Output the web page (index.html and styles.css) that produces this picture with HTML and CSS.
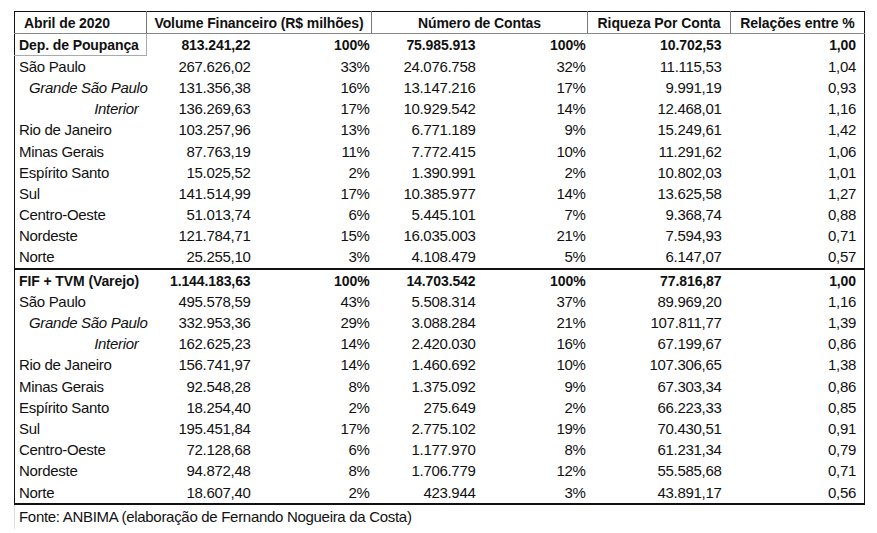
FILE: index.html
```html
<!DOCTYPE html>
<html lang="pt-BR">
<head>
<meta charset="utf-8">
<title>Abril de 2020</title>
<link rel="stylesheet" href="styles.css">
</head>
<body>
<div class="wrap">
<table class="tbl">
  <colgroup>
    <col class="c1"><col class="c2a"><col class="c2b"><col class="c3a"><col class="c3b"><col class="c4"><col class="c5">
  </colgroup>
  <thead>
    <tr class="head">
      <th class="h-first">Abril de 2020</th>
      <th colspan="2">Volume Financeiro (R$ milhões)</th>
      <th colspan="2">Número de Contas</th>
      <th>Riqueza Por Conta</th>
      <th>Relações entre %</th>
    </tr>
  </thead>
  <tbody>
    <tr class="total"><td class="lbl boxed">Dep. de Poupança</td><td class="n2a">813.241,22</td><td class="n2b">100%</td><td class="n3a">75.985.913</td><td class="n3b">100%</td><td class="n4">10.702,53</td><td class="n5">1,00</td></tr>
    <tr><td class="lbl">São Paulo</td><td class="n2a">267.626,02</td><td class="n2b">33%</td><td class="n3a">24.076.758</td><td class="n3b">32%</td><td class="n4">11.115,53</td><td class="n5">1,04</td></tr>
    <tr><td class="lbl sub">Grande São Paulo</td><td class="n2a">131.356,38</td><td class="n2b">16%</td><td class="n3a">13.147.216</td><td class="n3b">17%</td><td class="n4">9.991,19</td><td class="n5">0,93</td></tr>
    <tr><td class="lbl sub-r">Interior</td><td class="n2a">136.269,63</td><td class="n2b">17%</td><td class="n3a">10.929.542</td><td class="n3b">14%</td><td class="n4">12.468,01</td><td class="n5">1,16</td></tr>
    <tr><td class="lbl">Rio de Janeiro</td><td class="n2a">103.257,96</td><td class="n2b">13%</td><td class="n3a">6.771.189</td><td class="n3b">9%</td><td class="n4">15.249,61</td><td class="n5">1,42</td></tr>
    <tr><td class="lbl">Minas Gerais</td><td class="n2a">87.763,19</td><td class="n2b">11%</td><td class="n3a">7.772.415</td><td class="n3b">10%</td><td class="n4">11.291,62</td><td class="n5">1,06</td></tr>
    <tr><td class="lbl">Espírito Santo</td><td class="n2a">15.025,52</td><td class="n2b">2%</td><td class="n3a">1.390.991</td><td class="n3b">2%</td><td class="n4">10.802,03</td><td class="n5">1,01</td></tr>
    <tr><td class="lbl">Sul</td><td class="n2a">141.514,99</td><td class="n2b">17%</td><td class="n3a">10.385.977</td><td class="n3b">14%</td><td class="n4">13.625,58</td><td class="n5">1,27</td></tr>
    <tr><td class="lbl">Centro-Oeste</td><td class="n2a">51.013,74</td><td class="n2b">6%</td><td class="n3a">5.445.101</td><td class="n3b">7%</td><td class="n4">9.368,74</td><td class="n5">0,88</td></tr>
    <tr><td class="lbl">Nordeste</td><td class="n2a">121.784,71</td><td class="n2b">15%</td><td class="n3a">16.035.003</td><td class="n3b">21%</td><td class="n4">7.594,93</td><td class="n5">0,71</td></tr>
    <tr><td class="lbl">Norte</td><td class="n2a">25.255,10</td><td class="n2b">3%</td><td class="n3a">4.108.479</td><td class="n3b">5%</td><td class="n4">6.147,07</td><td class="n5">0,57</td></tr>
    <tr class="total sep"><td class="lbl">FIF + TVM (Varejo)</td><td class="n2a">1.144.183,63</td><td class="n2b">100%</td><td class="n3a">14.703.542</td><td class="n3b">100%</td><td class="n4">77.816,87</td><td class="n5">1,00</td></tr>
    <tr><td class="lbl">São Paulo</td><td class="n2a">495.578,59</td><td class="n2b">43%</td><td class="n3a">5.508.314</td><td class="n3b">37%</td><td class="n4">89.969,20</td><td class="n5">1,16</td></tr>
    <tr><td class="lbl sub">Grande São Paulo</td><td class="n2a">332.953,36</td><td class="n2b">29%</td><td class="n3a">3.088.284</td><td class="n3b">21%</td><td class="n4">107.811,77</td><td class="n5">1,39</td></tr>
    <tr><td class="lbl sub-r">Interior</td><td class="n2a">162.625,23</td><td class="n2b">14%</td><td class="n3a">2.420.030</td><td class="n3b">16%</td><td class="n4">67.199,67</td><td class="n5">0,86</td></tr>
    <tr><td class="lbl">Rio de Janeiro</td><td class="n2a">156.741,97</td><td class="n2b">14%</td><td class="n3a">1.460.692</td><td class="n3b">10%</td><td class="n4">107.306,65</td><td class="n5">1,38</td></tr>
    <tr><td class="lbl">Minas Gerais</td><td class="n2a">92.548,28</td><td class="n2b">8%</td><td class="n3a">1.375.092</td><td class="n3b">9%</td><td class="n4">67.303,34</td><td class="n5">0,86</td></tr>
    <tr><td class="lbl">Espírito Santo</td><td class="n2a">18.254,40</td><td class="n2b">2%</td><td class="n3a">275.649</td><td class="n3b">2%</td><td class="n4">66.223,33</td><td class="n5">0,85</td></tr>
    <tr><td class="lbl">Sul</td><td class="n2a">195.451,84</td><td class="n2b">17%</td><td class="n3a">2.775.102</td><td class="n3b">19%</td><td class="n4">70.430,51</td><td class="n5">0,91</td></tr>
    <tr><td class="lbl">Centro-Oeste</td><td class="n2a">72.128,68</td><td class="n2b">6%</td><td class="n3a">1.177.970</td><td class="n3b">8%</td><td class="n4">61.231,34</td><td class="n5">0,79</td></tr>
    <tr><td class="lbl">Nordeste</td><td class="n2a">94.872,48</td><td class="n2b">8%</td><td class="n3a">1.706.779</td><td class="n3b">12%</td><td class="n4">55.585,68</td><td class="n5">0,71</td></tr>
    <tr><td class="lbl">Norte</td><td class="n2a">18.607,40</td><td class="n2b">2%</td><td class="n3a">423.944</td><td class="n3b">3%</td><td class="n4">43.891,17</td><td class="n5">0,56</td></tr>
  </tbody>
</table>
<p class="source">Fonte: ANBIMA (elaboração de Fernando Nogueira da Costa)</p>
</div>
</body>
</html>
```

FILE: styles.css
```css
html, body {
  margin: 0;
  padding: 0;
  background: #fff;
}
body {
  font-family: "Liberation Sans", Arial, sans-serif;
  color: #111;
}
.wrap {
  padding: 11px 0 0 14px;
}
.tbl {
  border-collapse: collapse;
  table-layout: fixed;
  width: 850px;
  border-top: 1px solid #111;
  border-left: 1px solid #111;
  border-right: 1px solid #111;
  border-bottom: 2px solid #111;
  font-size: 15px;
  letter-spacing: -0.3px;
}
.c1 { width: 132px; }
.c2a { width: 111px; }
.c2b { width: 114px; }
.c3a { width: 108px; }
.c3b { width: 108px; }
.c4 { width: 143px; }
.c5 { width: 134px; }

.tbl th {
  height: 21px;
  padding: 0;
  font-size: 14px;
  font-weight: bold;
  letter-spacing: -0.1px;
  line-height: 16px;
  text-align: center;
  border-left: 1px solid #777;
  border-bottom: 1px solid #888;
  white-space: nowrap;
}
.tbl th.h-first {
  text-align: left;
  padding-left: 9px;
  border-left: 1px solid #111;
}
.tbl td {
  height: 21.2px;
  padding: 0;
  line-height: 16px;
  white-space: nowrap;
  text-align: right;
}
.tbl td.lbl {
  text-align: left;
  padding-left: 4px;
}
.tbl td.sub {
  font-style: italic;
  padding-left: 14px;
}
.tbl td.sub-r {
  font-style: italic;
  text-align: right;
  padding-right: 8px;
}
.tbl td.boxed {
  border-right: 1px solid #aaa;
  border-bottom: 1px solid #aaa;
}
.n2a { padding-right: 7px !important; }
.n2b { padding-right: 2px !important; }
.n3a { padding-right: 4px !important; }
.n3b { padding-right: 2px !important; }
.n4 { padding-right: 9px !important; }
.n5 { padding-right: 8px !important; }

.total td {
  font-size: 14px;
  letter-spacing: -0.1px;
  font-weight: bold;
}
.sep td {
  border-top: 2px solid #111;
}
.source {
  margin: 0;
  padding: 3px 0 4px 4px;
  font-size: 15px;
  letter-spacing: -0.3px;
  border-left: 1px solid #ddd;
  width: 500px;
}
```
